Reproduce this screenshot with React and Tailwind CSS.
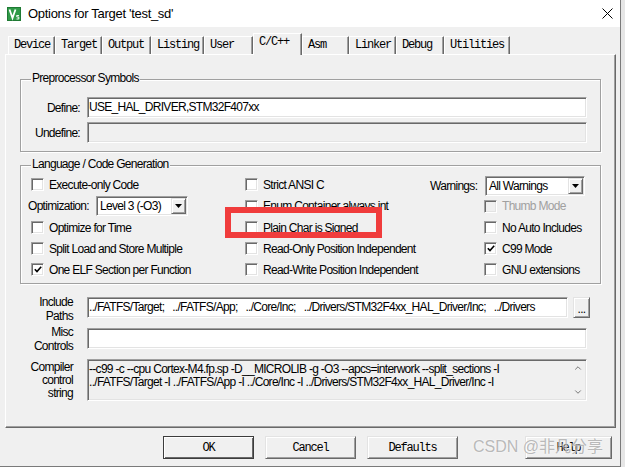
import React from 'react';
import { ChevronUp, ChevronDown } from 'lucide-react';

const sunken =
  'border border-t-[#a0a0a0] border-l-[#a0a0a0] border-r-white border-b-white shadow-[inset_1px_1px_0_#696969,inset_-1px_-1px_0_#e3e3e3]';
const raised =
  'border border-t-[#e3e3e3] border-l-[#e3e3e3] border-r-[#696969] border-b-[#696969] shadow-[inset_1px_1px_0_#fff,inset_-1px_-1px_0_#a0a0a0]';

const tabs = [
  ['Device', 47],
  ['Target', 47],
  ['Output', 49],
  ['Listing', 53],
  ['User', 49],
  ['C/C++', 49, true],
  ['Asm', 47],
  ['Linker', 47],
  ['Debug', 48],
  ['Utilities', 66],
];

const Check = ({ checked, disabled, label }) => (
  <div className="flex items-center gap-[5px] h-full">
    <span
      className={`w-[13px] h-[13px] shrink-0 flex items-center justify-center ${sunken} ${
        disabled ? 'bg-[#f0f0f0]' : 'bg-white'
      }`}
    >
      {checked && (
        <svg width="8" height="7" viewBox="0 0 8 7">
          <path d="M0.8 3.2 L3 5.6 L7.2 0.8" stroke="#000" strokeWidth="1.6" fill="none" />
        </svg>
      )}
    </span>
    <span className={`whitespace-nowrap ${disabled ? 'text-[#a0a0a0]' : ''}`}>{label}</span>
  </div>
);

const Select = ({ value, className }) => (
  <div className={`h-[20px] bg-white flex items-center justify-between pl-[3px] pr-[1px] ${sunken} ${className}`}>
    <span className="whitespace-nowrap">{value}</span>
    <span className={`w-[15px] h-[16px] bg-[#f0f0f0] flex items-center justify-center ${raised}`}>
      <svg width="7" height="4" viewBox="0 0 7 4">
        <path d="M0 0 H7 L3.5 4 Z" fill="#000" />
      </svg>
    </span>
  </div>
);

const Group = ({ title, className, children }) => (
  <div className={`relative border border-[#a0a0a0] shadow-[inset_1px_1px_0_#fff,1px_1px_0_#fff] ${className}`}>
    <span className="absolute -top-[9px] left-[10px] px-[1px] bg-[#f0f0f0] leading-[15px] whitespace-nowrap">
      {title}
    </span>
    {children}
  </div>
);

const Button = ({ label, isDefault, className }) => (
  <div
    className={`h-[23px] flex items-center justify-center bg-[#f0f0f0] font-['Liberation_Mono',monospace] text-[12px] tracking-[-1.2px] ${
      isDefault
        ? 'border border-[#3c3c3c] shadow-[inset_1px_1px_0_#fff,inset_-1px_-1px_0_#696969]'
        : raised
    } ${className}`}
  >
    {label}
  </div>
);

export default function App() {
  return (
    <div className="w-[625px] h-[467px] flex bg-[#f0f0f0] overflow-hidden font-['Liberation_Sans',Arial,sans-serif] text-[12px] tracking-[-0.7px] text-black">
      <div className="relative w-[621px] h-[467px] flex flex-col border-r border-b border-[#7a7a7a]">
        {/* title bar */}
        <div className="h-[27px] bg-white flex items-center pl-[7px] pr-[7px]">
          <svg width="14" height="14" viewBox="0 0 14 14">
            <rect x="0" y="0" width="14" height="14" fill="#1f7a34" />
            <rect x="1" y="1" width="12" height="12" fill="#2f9a47" />
            <path d="M2.5 2.5 L5.5 11 L8.5 2.5" stroke="#fff" strokeWidth="1.8" fill="none" />
            <path d="M9.5 8.5 H12 M9.8 8.5 V10 H11.8 V12 H9.5" stroke="#fff" strokeWidth="0.9" fill="none" />
          </svg>
          <span className="ml-[7px] text-[13px] tracking-[-0.3px]">Options for Target 'test_sd'</span>
          <svg className="ml-auto" width="11" height="11" viewBox="0 0 11 11">
            <path d="M0.5 0.5 L10.5 10.5 M10.5 0.5 L0.5 10.5" stroke="#000" strokeWidth="1" />
          </svg>
        </div>

        {/* tabs */}
        <div className="h-[27px] flex items-end pl-[8px] font-['Liberation_Mono',monospace] text-[12px] tracking-[-1.2px]">
          {tabs.map(([name, w, active]) =>
            active ? (
              <div
                key={name}
                className="relative z-10 -mb-[1px] h-[22px] bg-[#f0f0f0] border-t border-l border-white border-r border-r-[#696969] shadow-[inset_-1px_0_0_#a0a0a0] pl-[5px] leading-[16px]"
                style={{ width: w }}
              >
                {name}
              </div>
            ) : (
              <div
                key={name}
                className="h-[18px] border-t border-l border-white border-r border-r-[#696969] shadow-[inset_-1px_0_0_#a0a0a0] pl-[5px] leading-[17px]"
                style={{ width: w }}
              >
                {name}
              </div>
            )
          )}
        </div>

        {/* panel */}
        <div className="ml-[5px] w-[611px] h-[374px] flex flex-col pl-[14px] pt-[24px] border border-t-white border-l-white border-r-[#696969] border-b-[#696969] shadow-[inset_-1px_-1px_0_#a0a0a0]">
          <Group title="Preprocessor Symbols" className="w-[581px] h-[73px] pt-[17px] flex flex-col gap-[4px]">
            <div className="flex items-center h-[21px]">
              <span className="w-[59px] text-right mr-[7px]">Define:</span>
              <div className={`w-[500px] h-[21px] bg-white pl-[1px] leading-[19px] whitespace-nowrap ${sunken}`}>
                USE_HAL_DRIVER,STM32F407xx
              </div>
            </div>
            <div className="flex items-center h-[21px]">
              <span className="w-[59px] text-right mr-[7px]">Undefine:</span>
              <div className={`w-[500px] h-[21px] bg-[#f0f0f0] ${sunken}`} />
            </div>
          </Group>

          <Group
            title="Language / Code Generation"
            className="mt-[13px] w-[581px] h-[119px] pt-[8px] grid grid-cols-[224px_185px_1fr] grid-rows-[21px_22px_21px_21px_21px]"
          >
            <div className="pl-[10px]"><Check label="Execute-only Code" /></div>
            <div><Check label="Strict ANSI C" /></div>
            <div className="flex items-center pt-[3px]">
              <span className="w-[55px]">Warnings:</span>
              <Select value="All Warnings" className="w-[100px]" />
            </div>

            <div className="flex items-center pl-[7px]">
              <span className="w-[68px]">Optimization:</span>
              <Select value="Level 3 (-O3)" className="w-[92px]" />
            </div>
            <div><Check label="Enum Container always int" /></div>
            <div className="pl-[54px]"><Check disabled label="Thumb Mode" /></div>

            <div className="pl-[10px]"><Check label="Optimize for Time" /></div>
            <div><Check label="Plain Char is Signed" /></div>
            <div className="pl-[54px]"><Check label="No Auto Includes" /></div>

            <div className="pl-[10px]"><Check label="Split Load and Store Multiple" /></div>
            <div><Check label="Read-Only Position Independent" /></div>
            <div className="pl-[54px]"><Check checked label="C99 Mode" /></div>

            <div className="pl-[10px]"><Check checked label="One ELF Section per Function" /></div>
            <div><Check label="Read-Write Position Independent" /></div>
            <div className="pl-[54px]"><Check label="GNU extensions" /></div>
          </Group>

          <div className="mt-[13px] flex items-start h-[21px]">
            <div className="w-[53px] text-right leading-[14px] -mt-[2px] mr-[14px]">
              Include<br />Paths
            </div>
            <div className={`w-[481px] h-[21px] bg-white pl-[1px] leading-[19px] whitespace-pre overflow-hidden ${sunken}`}>
              {'../FATFS/Target;   ../FATFS/App;   ../Core/Inc;   ../Drivers/STM32F4xx_HAL_Driver/Inc;   ../Drivers'}
            </div>
            <div className={`ml-[5px] w-[17px] h-[21px] bg-[#f0f0f0] flex items-end justify-center pb-[4px] leading-[8px] ${raised}`}>
              ...
            </div>
          </div>

          <div className="mt-[10px] flex items-start h-[21px]">
            <div className="w-[53px] text-right leading-[14px] -mt-[3px] mr-[14px]">
              Misc<br />Controls
            </div>
            <div className={`w-[500px] h-[21px] bg-white ${sunken}`} />
          </div>

          <div className="mt-[10px] flex items-start h-[42px]">
            <div className="w-[53px] text-right leading-[13px] mt-[2px] mr-[14px]">
              Compiler<br />control<br />string
            </div>
            <div className={`w-[500px] h-[42px] bg-[#f0f0f0] flex ${sunken}`}>
              <div className="flex-1 pl-[1px] pt-[3px] leading-[13px] whitespace-pre overflow-hidden">
                <div>--c99 -c --cpu Cortex-M4.fp.sp -D__MICROLIB -g -O3 --apcs=interwork --split_sections -I</div>
                <div>../FATFS/Target -I ../FATFS/App -I ../Core/Inc -I ../Drivers/STM32F4xx_HAL_Driver/Inc -I</div>
              </div>
              <div className="w-[17px] flex flex-col items-center justify-between py-[3px] text-[#606060]">
                <ChevronUp size={10} strokeWidth={2} />
                <ChevronDown size={10} strokeWidth={2} />
              </div>
            </div>
          </div>
        </div>

        {/* buttons */}
        <div className="mt-[8px] flex pl-[163px]">
          <Button isDefault label="OK" className="w-[91px]" />
          <Button label="Cancel" className="ml-[11px] w-[91px]" />
          <Button label="Defaults" className="ml-[11px] w-[91px]" />
          <Button label="Help" className="ml-[67px] w-[87px]" />
        </div>

        {/* red highlight */}
        <div className="absolute left-[225px] top-[207px] w-[157px] h-[31px] border-[6px] border-[#f03c3c]" />

        {/* watermark */}
        <div className="absolute left-[473px] top-[437px] text-[16px] tracking-[0px] leading-[20px] text-[#a8a8a8]/80 [text-shadow:0_0_2px_#fff] font-['Liberation_Sans','Noto_Sans_CJK_SC',sans-serif] whitespace-nowrap">
          CSDN @非凡分享
        </div>
      </div>
      <div className="flex-1 bg-[#e6e6e6]" />
    </div>
  );
}
